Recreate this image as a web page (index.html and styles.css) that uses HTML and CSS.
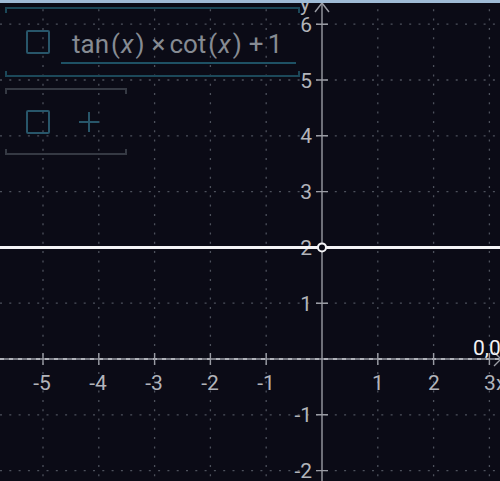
FILE: index.html
```html
<!DOCTYPE html>
<html lang="en">
<head>
    <meta charset="UTF-8">
    <meta name="viewport" content="width=device-width, initial-scale=1.0">
    <title>Graph</title>
    <link rel="stylesheet" href="styles.css">
</head>
<body>
    <div class="screen">
        <!-- plot area: grid, axes, labels and the function curve -->
        <svg class="plot" viewBox="0 0 500 481" width="500" height="481">
            <path class="grid" d="M43 0V481M98.8 0V481M154.6 0V481M210.4 0V481M266.2 0V481M377.8 0V481M433.6 0V481M489.4 0V481
                M0 24.2H500M0 80H500M0 135.8H500M0 191.6H500M0 303.2H500M0 414.8H500M0 470.6H500"/>

            <!-- axes -->
            <line class="axis" x1="0" y1="359" x2="500" y2="359"/>
            <line class="axis-dash" x1="0" y1="359" x2="500" y2="359"/>
            <line class="axis" x1="322" y1="3" x2="322" y2="481"/>
            <polyline class="axis" points="315,12 322,3 329,12"/>
            <polyline class="axis" points="494,352 501,359 494,366"/>

            <!-- tick marks -->
            <path class="axis" d="M43 353V365M98.8 353V365M154.6 353V365M210.4 353V365M266.2 353V365M377.8 353V365M433.6 353V365M489.4 353V365
                M316 24.2H328M316 80H328M316 135.8H328M316 191.6H328M316 247.4H328M316 303.2H328M316 414.8H328M316 470.6H328"/>

            <g class="tick-x">
                <text x="42" y="390">-5</text>
                <text x="98" y="390">-4</text>
                <text x="154" y="390">-3</text>
                <text x="210" y="390">-2</text>
                <text x="266" y="390">-1</text>
                <text x="378" y="390">1</text>
                <text x="434" y="390">2</text>
                <text x="490" y="390">3</text>
            </g>
            <g class="tick-y">
                <text x="312" y="31.7">6</text>
                <text x="312" y="87.5">5</text>
                <text x="312" y="143.3">4</text>
                <text x="312" y="199.1">3</text>
                <text x="312" y="254.9">2</text>
                <text x="312" y="310.7">1</text>
                <text x="312" y="422.3">-1</text>
                <text x="312" y="478.1">-2</text>
            </g>
            <text class="axis-name" x="300" y="11">y</text>
            <text class="axis-name" x="496" y="390">x</text>
            <text class="origin" x="473" y="355">0,0</text>

            <!-- y = tan(x)·cot(x) + 1, undefined at x = 0 -->
            <line class="curve" x1="0" y1="247.4" x2="500" y2="247.4"/>
            <circle class="hole" cx="322" cy="247.4" r="4"/>
        </svg>

        <div class="top-strip"></div>

        <div class="fn-panel">
            <div class="fn-row active">
                <span class="check"></span>
                <div class="formula">
                    <span>tan</span><span class="paren">(</span><i>x</i><span class="paren">)</span><span class="op">×</span><span>cot</span><span class="paren">(</span><i>x</i><span class="paren">)</span><span class="op">+</span><span>1</span>
                </div>
            </div>
            <div class="fn-row empty">
                <span class="check"></span>
                <span class="add"></span>
            </div>
        </div>
    </div>
</body>
</html>
```

FILE: styles.css
```css
* {
    margin: 0;
    padding: 0;
    box-sizing: border-box;
}

body {
    background-color: #0b0b16;
    font-family: Roboto, "Liberation Sans", sans-serif;
}

.screen {
    position: relative;
    width: 500px;
    height: 481px;
    overflow: hidden;
    background-color: #0b0b16;
}

.plot {
    display: block;
}

.grid {
    fill: none;
    stroke: #4d515c;
    stroke-width: 1.3;
    stroke-dasharray: 2 7.3;
}

.axis {
    fill: none;
    stroke: #9a9ca4;
    stroke-width: 1.4;
}

.axis-dash {
    stroke: #c4c6cc;
    stroke-width: 1.4;
    stroke-dasharray: 4 5;
}

.tick-x text {
    fill: #b2b4ba;
    font-size: 21px;
    text-anchor: middle;
}

.tick-y text {
    fill: #b2b4ba;
    font-size: 21px;
    text-anchor: end;
}

.axis-name {
    fill: #b2b4ba;
    font-size: 21px;
}

.origin {
    fill: #f2f2f4;
    font-size: 21px;
}

.curve {
    stroke: #f4f4f6;
    stroke-width: 3;
}

.hole {
    fill: #0b0b16;
    stroke: #f4f4f6;
    stroke-width: 2;
}

.top-strip {
    position: absolute;
    top: 0;
    left: 0;
    right: 0;
    height: 3px;
    background-color: #9fbbd6;
}

/* function list laid over the graph */
.fn-panel {
    position: absolute;
    left: 5px;
    top: 7px;
    display: flex;
    flex-direction: column;
    align-items: flex-start;
    gap: 11px;
}

.fn-row {
    position: relative;
    display: flex;
    align-items: flex-start;
    padding-left: 21px;
    border-top: 2px solid currentColor;
    border-bottom: 2px solid currentColor;
}

.fn-row::before,
.fn-row::after {
    content: "";
    position: absolute;
    left: 0;
    right: 0;
    height: 4px;
    border-left: 2px solid currentColor;
    border-right: 2px solid currentColor;
}

.fn-row::before {
    top: 0;
}

.fn-row::after {
    bottom: 0;
}

.fn-row.active {
    width: 295px;
    height: 70px;
    color: #1c4859;
}

.fn-row.empty {
    width: 122px;
    height: 67px;
    color: #353943;
}

.check {
    display: block;
    width: 24px;
    height: 24px;
    margin-top: 21px;
    border: 2px solid #28566a;
    border-radius: 2px;
}

.empty .check {
    margin-top: 20px;
}

.formula {
    display: flex;
    margin-top: 21px;
    margin-left: 11px;
    padding: 0 14px 4px 11px;
    border-bottom: 2px solid #1e5164;
    font-size: 26px;
    line-height: 28px;
    color: #868b93;
    white-space: nowrap;
}

.formula i {
    font-style: italic;
}

.formula .paren {
    margin: 0 1px 0 2px;
}

.formula .op {
    margin: 0 4px 0 6px;
}

.add {
    position: relative;
    display: block;
    width: 20px;
    height: 20px;
    margin: 22px 0 0 29px;
}

.add::before,
.add::after {
    content: "";
    position: absolute;
    background-color: #28566a;
}

.add::before {
    left: 0;
    right: 0;
    top: 9px;
    height: 2px;
}

.add::after {
    top: 0;
    bottom: 0;
    left: 9px;
    width: 2px;
}
```
